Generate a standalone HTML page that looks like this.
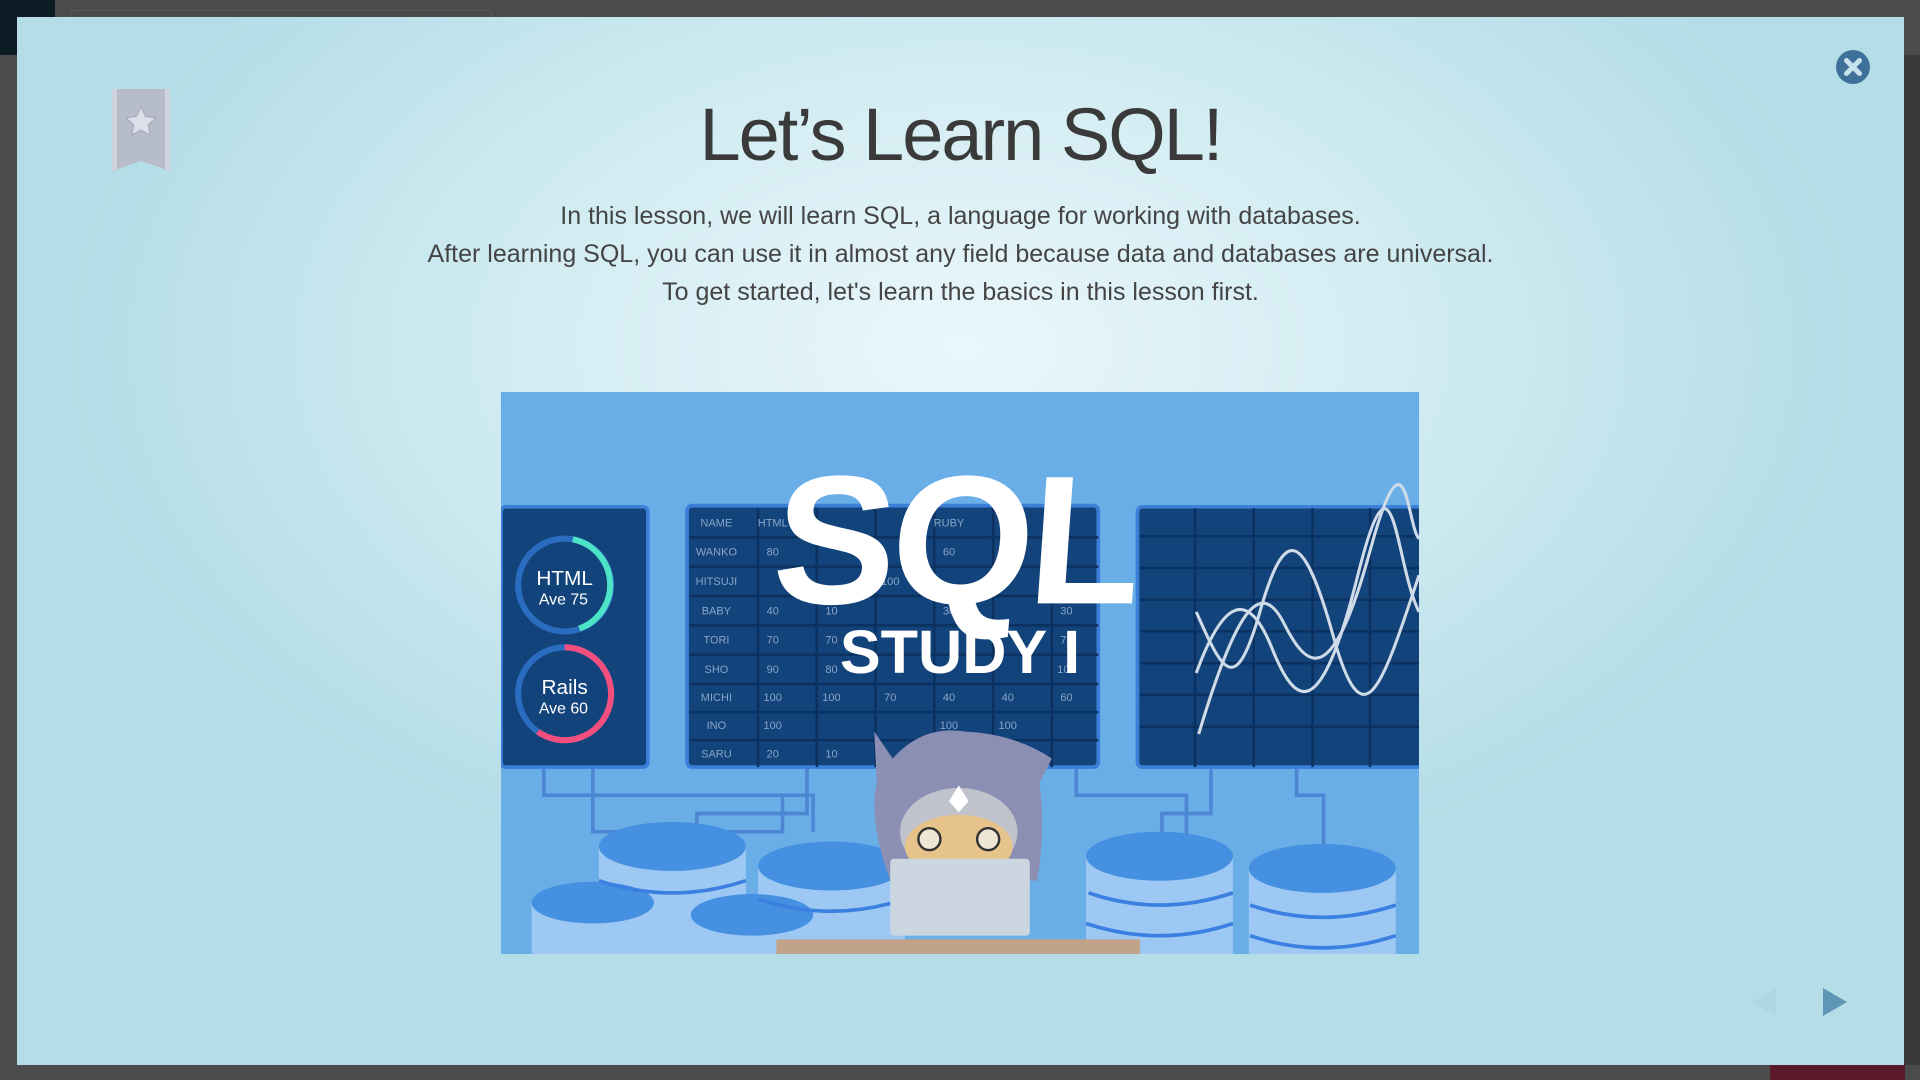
<!DOCTYPE html>
<html><head><meta charset="utf-8"><style>
html,body{margin:0;padding:0;width:1920px;height:1080px;overflow:hidden;background:#4b4b4b;font-family:"Liberation Sans",sans-serif}
.tl{position:absolute;left:0;top:0;width:55px;height:55px;background:#0d1b25}
.bar{position:absolute;left:70px;top:10px;width:420px;height:20px;border:1px solid #5a5a5a;border-radius:4px}
.sb{position:absolute;left:1904px;top:55px;width:16px;height:1010px;background:#3a3a3a}
.contact{position:absolute;left:1770px;top:1062px;width:135px;height:18px;background:#5a1a2a}
.modal{position:absolute;left:17px;top:17px;width:1887px;height:1048px;
background:radial-gradient(ellipse 900px 560px at 944px 330px,#eaf7fb 0%,#d4edf3 45%,#b4dde7 100%);}
h1{position:absolute;left:0;right:0;top:73px;margin:0;text-align:center;font-weight:normal;font-size:74px;color:#3a3a3a;letter-spacing:-2px;line-height:90px}
.p{position:absolute;left:0;right:0;top:180px;text-align:center;font-size:25px;line-height:38px;color:#444}
.img{position:absolute;left:484px;top:375px;width:918px;height:562px}
</style></head><body>
<div class="tl"></div><div class="bar"></div><div class="sb"></div><div class="contact"></div>
<div class="modal">
<svg style="position:absolute;left:95px;top:72px" width="58" height="82" viewBox="0 0 58 82">
<path d="M0 0H58V82L29 72L0 82Z" fill="#b6bcc9"/><path d="M0 0H5V82H0Z" fill="#cfd3dc"/><path d="M53 0H58V82H53Z" fill="#cfd3dc"/>
<path d="M29 18l4.5 9.5 10.3 1.3-7.6 7.1 2 10.2L29 41l-9.2 5.1 2-10.2-7.6-7.1 10.3-1.3z" fill="#dde0e8" stroke="#9aa0ad" stroke-width="0.8"/>
</svg>
<svg style="position:absolute;left:1818px;top:32px" width="36" height="36" viewBox="0 0 36 36">
<circle cx="18" cy="18" r="17" fill="#3d7199"/>
<path d="M11.5 11.5L24.5 24.5M24.5 11.5L11.5 24.5" stroke="#c6e3ec" stroke-width="5" stroke-linecap="round"/>
</svg>
<svg style="position:absolute;left:1734px;top:970px" width="30" height="30" viewBox="0 0 30 30"><path d="M25 1V29L1 15Z" fill="#aed7e3"/></svg>
<svg style="position:absolute;left:1805px;top:970px" width="30" height="30" viewBox="0 0 30 30"><path d="M1 1V29L25 15Z" fill="#5e96b5"/></svg>
<h1>Let’s Learn SQL!</h1>
<div class="p">In this lesson, we will learn SQL, a language for working with databases.<br>After learning SQL, you can use it in almost any field because data and databases are universal.<br>To get started, let's learn the basics in this lesson first.</div>
<svg class="img" viewBox="0 0 750 460" preserveAspectRatio="none">
<rect width="750" height="460" fill="#6aaee8"/>
<g stroke="#4e86d4" stroke-width="3" fill="none">
<path d="M35 307V330H255V360M75 307V360H230V330M250 307V345H160V400M470 307V330H560V420M580 307V345H540V390M650 307V330H672V390"/>
</g>
<g>
<rect x="0" y="94" width="120" height="213" rx="4" fill="#12437a" stroke="#3b7fd8" stroke-width="3"/>
<rect x="152" y="93" width="336" height="214" rx="4" fill="#12437a" stroke="#3b7fd8" stroke-width="3"/>
<rect x="520" y="94" width="240" height="213" rx="4" fill="#12437a" stroke="#3b7fd8" stroke-width="3"/>
</g>
<g stroke="#0b3160" stroke-width="2">
<path d="M210 95V307M258 95V307M306 95V307M354 95V307M402 95V307M450 95V307M154 119H488M154 143H488M154 167H488M154 191H488M154 215H488M154 239H488M154 262H488M154 285H488"/>
<path d="M567 95V307M615 95V307M663 95V307M710 95V307M522 118H750M522 144H750M522 170H750M522 196H750M522 222H750M522 248H750M522 274H750"/>
</g>
<g font-family="Liberation Sans Narrow,Liberation Sans,sans-serif" font-size="9" fill="#8aa5c8" text-anchor="middle">
<text x="176" y="110">NAME</text><text x="222" y="110">HTML</text><text x="366" y="110">RUBY</text>
<text x="176" y="134">WANKO</text><text x="222" y="134">80</text><text x="366" y="134">60</text>
<text x="176" y="158">HITSUJI</text><text x="318" y="158">100</text>
<text x="176" y="182">BABY</text><text x="222" y="182">40</text><text x="270" y="182">10</text><text x="366" y="182">30</text><text x="462" y="182">30</text>
<text x="176" y="206">TORI</text><text x="222" y="206">70</text><text x="270" y="206">70</text><text x="462" y="206">70</text>
<text x="176" y="230">SHO</text><text x="222" y="230">90</text><text x="270" y="230">80</text><text x="462" y="230">100</text>
<text x="176" y="253">MICHI</text><text x="222" y="253">100</text><text x="270" y="253">100</text><text x="318" y="253">70</text><text x="366" y="253">40</text><text x="414" y="253">40</text><text x="462" y="253">60</text>
<text x="176" y="276">INO</text><text x="222" y="276">100</text><text x="366" y="276">100</text><text x="414" y="276">100</text>
<text x="176" y="299">SARU</text><text x="222" y="299">20</text><text x="270" y="299">10</text>
</g>
<circle cx="52" cy="158" r="38" fill="none" stroke="#2a6cc0" stroke-width="5"/>
<path d="M52 120A38 38 0 0 1 70 191" fill="none" stroke="#4de3c7" stroke-width="5" transform="rotate(10 52 158)"/>
<circle cx="52" cy="247" r="38" fill="none" stroke="#2a6cc0" stroke-width="5"/>
<path d="M52 209A38 38 0 1 1 30 278" fill="none" stroke="#f24f7f" stroke-width="5"/>
<g fill="#fff" text-anchor="middle" font-family="Liberation Sans Narrow,Liberation Sans,sans-serif">
<text x="52" y="158" font-size="17">HTML</text><text x="51" y="174" font-size="13">Ave 75</text>
<text x="52" y="247" font-size="17">Rails</text><text x="51" y="263" font-size="13">Ave 60</text>
</g>
<path d="M568 180C590 230 600 250 620 180S655 110 680 200 720 240 750 150M568 230C590 170 610 160 630 210S670 270 700 150 730 140 750 180M570 280C600 180 620 150 640 190S680 240 710 130 740 110 750 120" stroke="#d0dbe8" stroke-width="2.5" fill="none"/>
<text x="380" y="173" font-family="Liberation Sans,sans-serif" font-weight="bold" font-size="150" fill="#fff" text-anchor="middle" letter-spacing="-4" transform="skewX(-4)">SQL</text>
<text x="375" y="230" font-family="Liberation Sans Narrow,Liberation Sans,sans-serif" font-weight="bold" font-size="50" fill="#fff" text-anchor="middle">STUDY I</text>
<g>
<g fill="#4590e0"><ellipse cx="140" cy="372" rx="60" ry="20"/><ellipse cx="75" cy="418" rx="50" ry="17"/><ellipse cx="205" cy="428" rx="50" ry="17"/><ellipse cx="270" cy="388" rx="60" ry="20"/><ellipse cx="538" cy="380" rx="60" ry="20"/><ellipse cx="671" cy="390" rx="60" ry="20"/></g>
<g fill="#9cc8f3"><rect x="80" y="372" width="120" height="88"/><rect x="25" y="418" width="100" height="42"/><rect x="155" y="428" width="100" height="32"/><rect x="210" y="388" width="120" height="72"/><rect x="478" y="380" width="120" height="80"/><rect x="611" y="390" width="120" height="70"/></g>
<g fill="#4590e0"><ellipse cx="140" cy="372" rx="60" ry="20"/><ellipse cx="75" cy="418" rx="50" ry="17"/><ellipse cx="205" cy="428" rx="50" ry="17"/><ellipse cx="270" cy="388" rx="60" ry="20"/><ellipse cx="538" cy="380" rx="60" ry="20"/><ellipse cx="671" cy="390" rx="60" ry="20"/></g>
<g stroke="#3b7fe0" stroke-width="3" fill="none"><path d="M80 400Q140 420 200 400M480 410Q538 430 598 410M612 420Q671 440 731 420M478 435Q538 455 598 435M612 445Q671 465 731 445M210 415Q270 435 330 415"/></g>
</g>
<path d="M305 278L320 300Q345 272 380 278Q420 280 450 300L440 320Q445 360 438 400L318 400Q300 350 307 320Z" fill="#8a8fb3"/>
<ellipse cx="374" cy="360" rx="48" ry="36" fill="#c0c2cc"/>
<ellipse cx="374" cy="372" rx="44" ry="26" fill="#e6c38a"/>
<circle cx="350" cy="366" r="9" fill="#f0e6d6" stroke="#333" stroke-width="2"/><circle cx="398" cy="366" r="9" fill="#f0e6d6" stroke="#333" stroke-width="2"/>
<path d="M374 322L382 335L374 344L366 335Z" fill="#fff"/>
<rect x="318" y="382" width="114" height="63" rx="3" fill="#ccd6e0"/>
<rect x="225" y="448" width="297" height="12" fill="#c1a38a"/>
</svg>
</div>
</body></html>
